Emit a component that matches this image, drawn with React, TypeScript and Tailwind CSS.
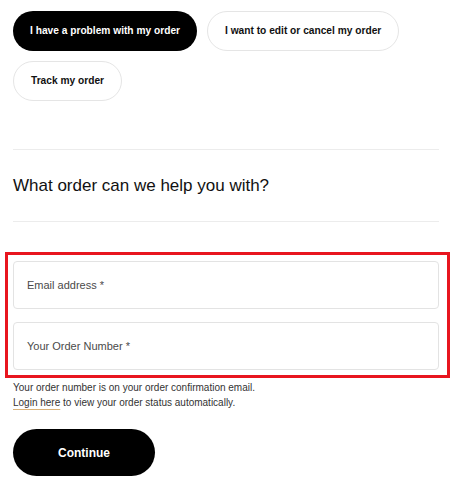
import React from 'react';

const options = [
  { label: 'I have a problem with my order', active: true },
  { label: 'I want to edit or cancel my order', active: false },
  { label: 'Track my order', active: false },
];

function Field({ label }: { label: string }) {
  return (
    <div className="h-12 rounded border border-[#e3e3e3] bg-white flex items-center px-[13px] text-[11px] text-[#4a4a4a]">
      {label}
    </div>
  );
}

export default function App() {
  return (
    <div className="min-h-screen bg-white font-['Liberation_Sans',Arial,sans-serif] text-[#111]">
      <div className="w-[426px] ml-[13px] pt-[11px]">
        {/* Order topic pills */}
        <div className="flex flex-wrap gap-[10px]">
          {options.map((o) => (
            <button
              key={o.label}
              className={
                o.active
                  ? 'h-10 px-[17px] rounded-full bg-black text-white text-[10.2px] font-bold'
                  : 'h-10 px-[17px] rounded-full border border-[#e5e5e5] bg-white text-[#111] text-[10.2px] font-bold'
              }
            >
              {o.label}
            </button>
          ))}
        </div>

        <div className="mt-[48px] border-t border-[#ececec]" />
        <h2 className="h-[71px] flex items-center text-[17px] text-[#111]">What order can we help you with?</h2>
        <div className="border-t border-[#ececec]" />

        {/* Lookup fields */}
        <div className="relative mt-[39px] flex flex-col gap-[13px]">
          <Field label="Email address *" />
          <Field label="Your Order Number *" />
          <div className="absolute -left-[8px] -right-[11px] -top-[9px] -bottom-[8px] border-[3px] border-[#e8151f] pointer-events-none" />
        </div>

        <div className="mt-[10px] text-[10px] leading-[15px] text-[#333]">
          <p>Your order number is on your order confirmation email.</p>
          <p>
            <a href="#" className="underline decoration-[#d9b27a] underline-offset-[3px]">Login here</a> to view your order status automatically.
          </p>
        </div>

        <button className="mt-[19px] w-[142px] h-[47px] rounded-full bg-black text-white text-[12px] font-bold">
          Continue
        </button>
      </div>
    </div>
  );
}
